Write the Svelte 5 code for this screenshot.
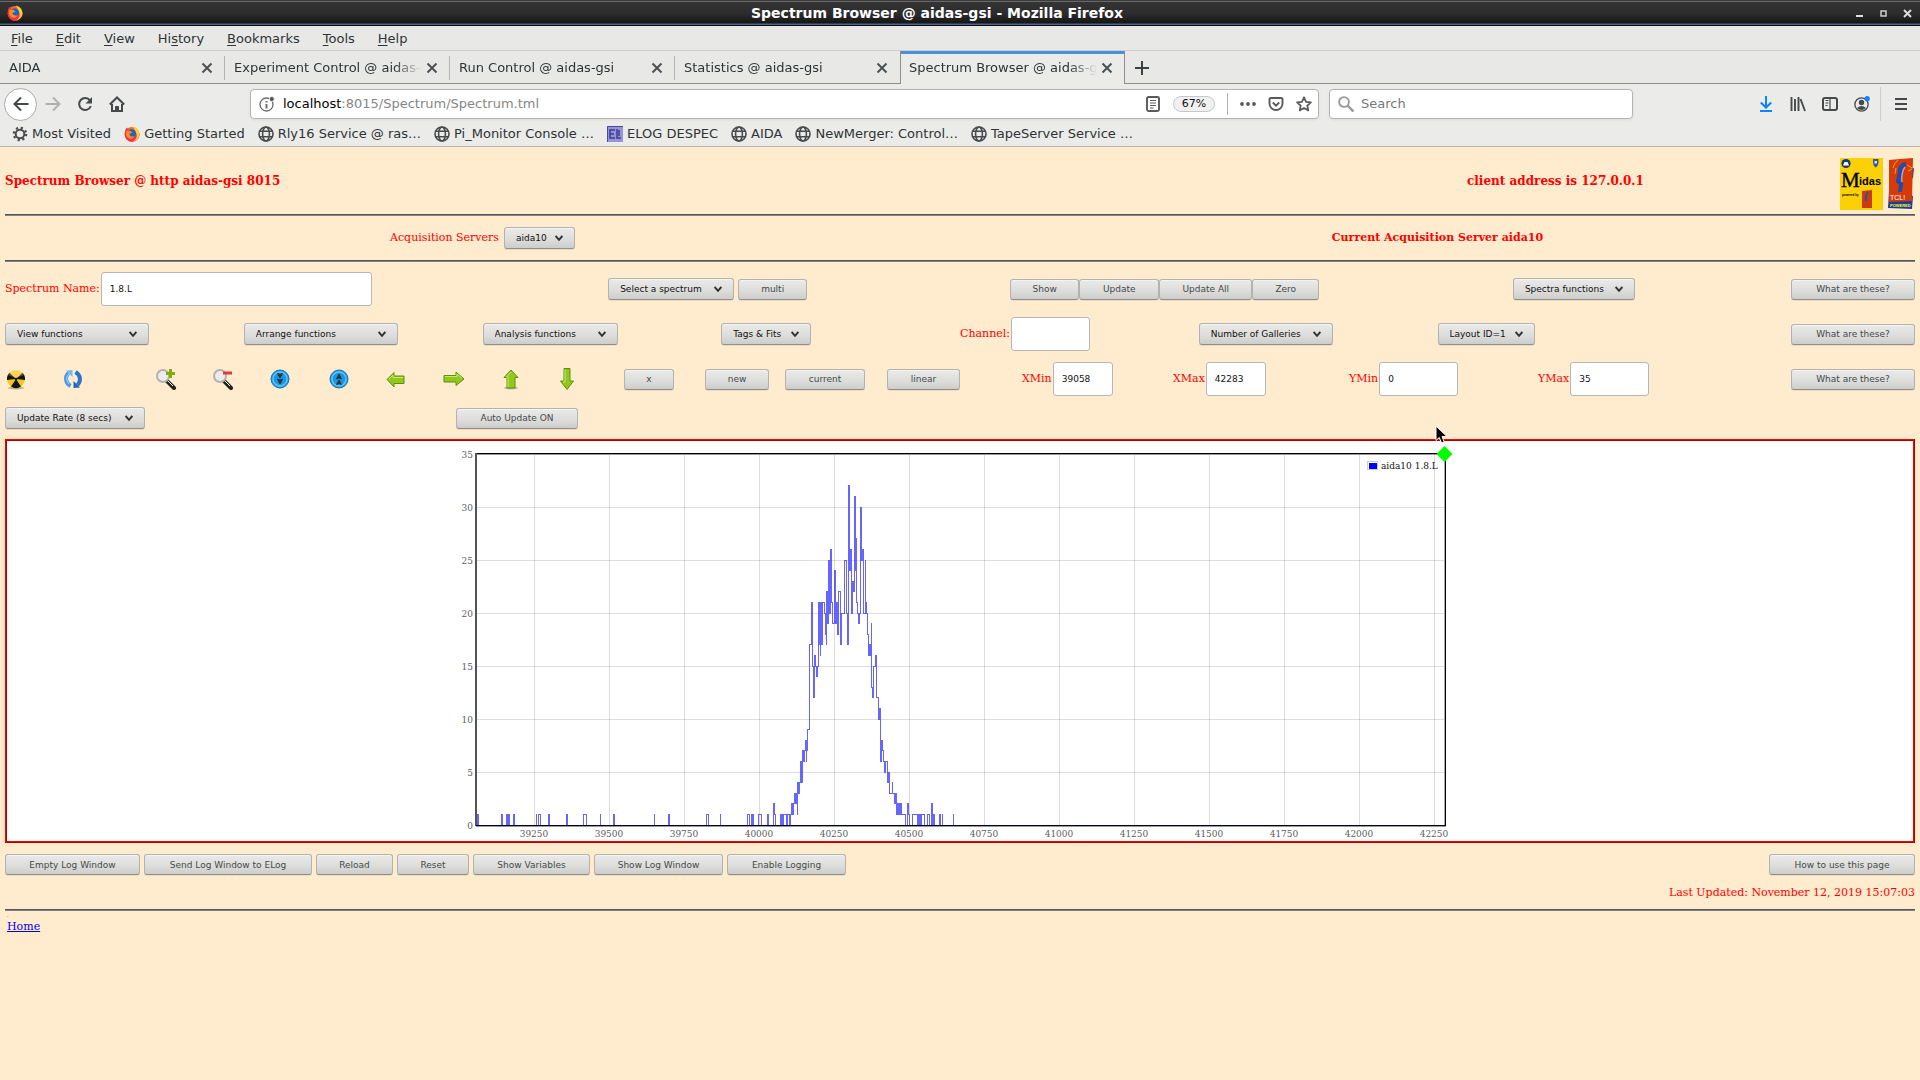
<script>
  const menus = [
    ['', 'F', 'ile'], ['', 'E', 'dit'], ['', 'V', 'iew'], ['Hi', 's', 'tory'],
    ['', 'B', 'ookmarks'], ['', 'T', 'ools'], ['', 'H', 'elp']
  ];
  const tabs = [
    'AIDA', 'Experiment Control @ aidas-gsi', 'Run Control @ aidas-gsi',
    'Statistics @ aidas-gsi', 'Spectrum Browser @ aidas-gsi'
  ];
  const bookmarks = [
    ['gear', 'Most Visited'], ['fox', 'Getting Started'], ['globe', 'Rly16 Service @ ras…'],
    ['globe', 'Pi_Monitor Console …'], ['elog', 'ELOG DESPEC'], ['globe', 'AIDA'],
    ['globe', 'NewMerger: Control…'], ['globe', 'TapeServer Service …']
  ];
  const footerButtons = [
    ['Empty Log Window', 135], ['Send Log Window to ELog', 168], ['Reload', 77], ['Reset', 72],
    ['Show Variables', 117], ['Show Log Window', 129], ['Enable Logging', 119]
  ];

  const yTicks = [0, 5, 10, 15, 20, 25, 30, 35];
  const xTicks = [39250, 39500, 39750, 40000, 40250, 40500, 40750, 41000, 41250, 41500, 41750, 42000, 42250];
  const px = (c) => Math.round((c - 39250) * 0.3 + 74);
  const py = (v) => Math.round(384 - v * 10.6);

  // [third-of-pixel position, counts]: the value holds until the next entry
  const counts = [
    [50, 0], [53, 1], [55, 0], [125, 1], [127, 0], [139, 1], [141, 0], [145, 1], [147, 0], [161, 1], [163, 0],
    [228, 1], [230, 0], [235, 1], [241, 0], [266, 1], [268, 0], [320, 1], [322, 0], [371, 1], [379, 0],
    [420, 1], [422, 0], [461, 1], [463, 0], [582, 1], [584, 0], [626, 1], [628, 0], [739, 1], [746, 0],
    [780, 1], [782, 0], [863, 1], [869, 0], [874, 1], [876, 0], [879, 1], [881, 0], [895, 1], [904, 0],
    [923, 1], [925, 0], [941, 2], [944, 1], [946, 0], [961, 1], [963, 0], [966, 1], [968, 0], [971, 1],
    [979, 0], [983, 1], [989, 0]
  ];
  const peak = [
    [31, 1], [33, 2], [35, 1], [37, 2], [39, 1], [41, 2], [43, 3], [45, 2], [48, 3], [52, 1], [53, 4], [55, 3], [58, 4],
    [61, 6], [64, 4], [66, 6], [68, 7], [70, 6], [72, 7], [75, 8], [78, 6], [80, 7], [83, 9], [89, 17],
    [95, 21], [97, 15], [101, 12], [103, 16], [106, 15], [109, 14], [113, 15], [116, 21], [118, 17], [120, 16],
    [122, 21], [124, 17], [126, 21], [133, 20], [135, 18], [138, 17], [140, 22], [143, 19], [145, 25],
    [148, 20], [151, 26], [154, 21], [158, 19], [163, 24], [165, 19], [168, 21], [171, 20], [173, 18],
    [176, 22], [182, 17], [184, 20], [194, 25], [200, 20], [203, 17], [206, 32], [208, 24], [211, 26],
    [214, 20], [217, 23], [220, 22], [222, 31], [225, 24], [228, 27], [230, 21], [233, 20], [236, 19],
    [238, 20], [241, 30], [244, 25], [247, 26], [249, 25], [251, 20], [255, 25], [257, 21], [260, 20],
    [262, 18], [265, 16], [268, 17], [270, 16], [273, 19], [275, 13], [278, 12], [281, 15], [287, 16],
    [290, 12], [295, 10], [298, 11], [301, 6], [303, 8], [307, 7], [310, 6], [314, 5], [316, 6], [322, 4],
    [325, 5], [327, 3], [336, 4], [338, 3], [343, 2], [346, 3], [349, 1], [352, 2], [354, 1], [357, 2],
    [359, 1], [362, 2], [365, 1], [377, 0], [381, 2], [384, 1], [389, 0], [397, 1], [413, 0], [416, 1],
    [418, 0], [420, 1], [423, 0], [425, 1], [432, 0], [443, 1], [448, 0], [455, 2], [457, 0], [459, 1],
    [462, 0], [479, 1], [482, 0], [486, 1], [488, 0], [519, 1], [521, 0], [1940, 0]
  ];
  const trace = [...counts, ...peak.map(([x, v]) => [x + 960, v])]
    .map(([x, v], i) => (i ? 'H' : 'M') + (x / 3).toFixed(1) + (i ? 'V' : ' ') + (384 - v * 10.6).toFixed(1))
    .join('');
</script>

{#snippet globe()}
  <svg class="i16" viewBox="0 0 16 16" fill="none" stroke="#474b4d" stroke-width="1.6">
    <circle cx="8" cy="8" r="7" /><ellipse cx="8" cy="8" rx="3.4" ry="7" /><path d="M2 5.2h12M2 10.8h12" />
  </svg>
{/snippet}

{#snippet fox()}
  <svg class="i16" viewBox="0 0 16 16">
    <circle cx="8" cy="8.3" r="7.4" fill="#ff6a1a" />
    <path d="M.7 8C.8 4 2 2.4 3.2 1.6l.6 2L8 9l7.4-2A7.4 7.4 0 0 1 8 15.7 7.4 7.4 0 0 1 .7 8z" fill="#f0304e" />
    <path d="M9 .4c4 1 6.600 4.400 6.400 8.400-.2 3.200-3 6-6 6.400 3-2 4-5 3-8z" fill="#ffd02c" />
    <circle cx="7.800" cy="7.500" r="4.200" fill="#1766c8" />
    <path d="M2.500 4.500 6.500 5l2 1.500-3 1.500c0 2 2 3 5 2.200-1 2.500-3.500 3-5.500 2.300C2 11 1.500 8 2.500 4.500z" fill="#ff8a1c" />
  </svg>
{/snippet}

{#snippet close()}
  <svg class="x" viewBox="0 0 12 12" stroke="#4a4e50" stroke-width="1.900"><path d="M1.500 1.500l9 9M10.500 1.500l-9 9" /></svg>
{/snippet}

{#snippet choice(label, size)}
  <span class="choice {size}">
    <select aria-label={label}><option>{label}</option></select>
    <svg viewBox="0 0 8 8" fill="none" stroke="#2e3436" stroke-width="2"><path d="M.6 2 4 5.800 7.400 2" /></svg>
  </span>
{/snippet}

<div class="window">
  <header class="title">
    <span class="app">{@render fox()}</span>
    <h1>Spectrum Browser @ aidas-gsi - Mozilla Firefox</h1>
    <div class="controls">
      <button aria-label="Minimize"><svg viewBox="0 0 9 9"><path d="M1 6h7v2H1z" fill="#ddd" /></svg></button>
      <button aria-label="Maximize"><svg viewBox="0 0 9 9"><path d="M2 2h5v5H2z" fill="none" stroke="#ccc" stroke-width="1.500" /></svg></button>
      <button aria-label="Close"><svg viewBox="0 0 9 9"><path d="M1 1l7 7M8 1 1 8" stroke="#ddd" stroke-width="2" /></svg></button>
    </div>
  </header>

  <nav class="menus">
    {#each menus as [a, b, c]}<button>{a}<u>{b}</u>{c}</button>{/each}
  </nav>

  <div class="tabs">
    {#each tabs as tab, i}
      <div class="tab" class:active={i === 4} class:last={i === 3}>
        <button class="name">{tab}</button>
        <button class="shut" aria-label="Close tab">{@render close()}</button>
      </div>
    {/each}
    <button class="plus" aria-label="New tab"><svg viewBox="0 0 14 14" stroke="#3c4042" stroke-width="2"><path d="M7 0v14M0 7h14" /></svg></button>
  </div>

  <div class="toolbar">
    <button class="back" aria-label="Back"><svg class="i16" viewBox="0 0 16 16" fill="none" stroke="#45494b" stroke-width="2"><path d="M15.500 8H1.500M8 1.500 1.500 8 8 14.500" /></svg></button>
    <button class="tool" aria-label="Forward"><svg class="i16" viewBox="0 0 16 16" fill="none" stroke="#aeb0b0" stroke-width="2"><path d="M.5 8h14M8 1.500 14.500 8 8 14.500" /></svg></button>
    <button class="tool" aria-label="Reload"><svg class="i16" viewBox="0 0 16 16" fill="none" stroke="#45494b" stroke-width="2"><path d="M13 4.500A6 6 0 1 0 13.800 10" /><path d="M15 1v6.500H8.500z" fill="#45494b" stroke="none" /></svg></button>
    <button class="tool" aria-label="Home"><svg class="i16" viewBox="0 0 16 16" fill="none" stroke="#45494b" stroke-width="2"><path d="M.8 8.500 8 1.500l7.200 7M3 8v7h10V8" /><path d="M6.500 14.500v-4h3v4z" fill="#45494b" stroke-width="1" /></svg></button>

    <div class="url field">
      <svg class="i16" viewBox="0 0 16 16" fill="none" stroke="#6a6a6a" stroke-width="1.300"><circle cx="7.500" cy="8.500" r="6.500" /><path d="M7.500 8v4.500M7.500 5v1.500" stroke-width="1.900" /><circle cx="12.800" cy="3" r="2.500" fill="#555" stroke="#fff" stroke-width=".8" /></svg>
      <button class="address"><b>localhost</b>:8015/Spectrum/Spectrum.tml</button>
      <svg class="i16" viewBox="0 0 16 16" fill="none" stroke="#5a5a5a"><rect x="2" y="1" width="12" height="14" rx="1.500" stroke-width="1.900" /><path d="M5 4.500h6M5 7h6M5 9.500h6M5 12h3.500" stroke-width="1.100" /></svg>
      <button class="zoom">67%</button>
      <i class="rule"></i>
      <svg class="i16" viewBox="0 0 16 16" fill="#5a5a5a"><circle cx="2" cy="8" r="1.900" /><circle cx="8" cy="8" r="1.900" /><circle cx="14" cy="8" r="1.900" /></svg>
      <svg class="i16" viewBox="0 0 16 16" fill="none" stroke="#5a5a5a" stroke-width="1.900"><path d="M2.500 2h11q1 0 1 1v4.500a6.500 6.500 0 0 1-13 0V3q0-1 1-1z" /><path d="M4.800 6.500 8 9.600l3.200-3.100" /></svg>
      <svg class="i16" viewBox="0 0 16 16" fill="none" stroke="#5a5a5a" stroke-width="1.800" stroke-linejoin="round"><path d="M8 1.300l2 4.500 4.900.5-3.600 3.300 1 4.800L8 12l-4.300 2.400 1-4.800L1.100 6.300 6 5.800z" /></svg>
    </div>

    <label class="search field">
      <svg class="i16" viewBox="0 0 16 16" fill="none" stroke="#9a9a9a" stroke-width="1.900"><circle cx="6" cy="6" r="4.900" /><path d="M9.500 9.500l6 6" stroke-width="2.400" /></svg>
      <input aria-label="Search" placeholder="Search" />
    </label>

    <div class="extras">
      <button class="tool" aria-label="Downloads"><svg class="i16" viewBox="0 0 16 16" fill="none" stroke="#0a84ff" stroke-width="2"><path d="M8 0v11M2.800 6.500 8 11.500l5.200-5M2 15h12" /></svg></button>
      <button class="tool" aria-label="Library"><svg class="i16" viewBox="0 0 16 16" fill="none" stroke="#45494b" stroke-width="1.900"><path d="M1.500 1v14M5 3v12M8.500 1v14M10.500 3l4.500 12" /></svg></button>
      <button class="tool" aria-label="Sidebars"><svg class="i16" viewBox="0 0 16 16" fill="none" stroke="#45494b"><rect x="1" y="2" width="14" height="12" rx="2" stroke-width="2" /><path d="M8 2v12" stroke-width="1.200" /><path d="M3.500 4.500h3M3.500 7h3M3.500 9.500h2" /></svg></button>
      <button class="tool" aria-label="Account"><svg class="i16" viewBox="0 0 16 16"><circle cx="7.500" cy="8.500" r="6.600" fill="none" stroke="#45494b" stroke-width="1.300" /><circle cx="7.500" cy="6.500" r="2.700" fill="#45494b" /><path d="M3 12q4.500-4 9 0-4.500 4-9 0z" fill="#45494b" /><circle cx="13.200" cy="2.700" r="2.600" fill="#0a84ff" /></svg></button>
      <i class="rule"></i>
      <button class="tool" aria-label="Menu"><svg class="i16" viewBox="0 0 16 16" stroke="#45494b" stroke-width="2"><path d="M2 3h12M2 8h12M2 13h12" /></svg></button>
    </div>
  </div>

  <nav class="bookmarks">
    {#each bookmarks as [icon, label]}
      <button>
        {#if icon === 'globe'}{@render globe()}
        {:else if icon === 'fox'}{@render fox()}
        {:else if icon === 'gear'}
          <svg class="i16" viewBox="0 0 16 16" fill="none" stroke="#474b4d"><circle cx="8" cy="8" r="4.300" stroke-width="2" /><circle cx="8" cy="8" r="6.200" stroke-width="2.200" stroke-dasharray="2.200 2.670" /></svg>
        {:else}
          <svg class="i16" viewBox="0 0 16 16"><path d="M0 0h16v16H0z" fill="#9494dc" /><path d="M.5 16V.5H16" fill="none" stroke="#4a4a8c" /><path d="M8 4H3v8h5M3 8h4M10 3v9h4M12 4v6" fill="none" stroke="#3c3c86" stroke-width="1.500" /></svg>
        {/if}
        {label}
      </button>
    {/each}
  </nav>

  <main>
    <header class="head">
      <h2>Spectrum Browser @ http aidas-gsi 8015</h2>
      <h2>client address is 127.0.0.1</h2>
      <div class="logos">
        <svg width="43" height="52" viewBox="0 0 43 52">
          <path d="M0 0h43v52H0z" fill="#fbd005" />
          <circle cx="6" cy="5.500" r="4.600" fill="#123c7c" /><path d="M3 7.500h6L7.500 4h-3z" fill="#fff" />
          <path d="M33 1h5.500v4q-.5 3-2.700 4.500Q33.500 8 33 5z" fill="#3457a8" /><path d="M34.500 3h2.500v2.500h-2.500z" fill="#dde" />
          <text x="1" y="29" font-family="Liberation Serif" font-size="21" stroke="#000" stroke-width=".4">M</text>
          <text x="19" y="27" font-family="Liberation Sans" font-weight="bold" font-size="11">idas</text>
          <text x="2" y="38" font-family="Liberation Sans" font-weight="bold" font-size="3">powered by</text>
          <path d="M22 33l10-1v18H22z" fill="#d03a10" /><path d="M28 34q-3 4-2 9" stroke="#2a50b0" stroke-width="2" fill="none" />
        </svg>
        <svg width="28" height="52" viewBox="0 0 28 52">
          <path d="M2 33l24 5-1 13-24-1zM22 12l5-2-1 10-3 1z" fill="#1b3f96" />
          <path d="M2 2l11-1 13-1-1 43-23 1z" fill="#d63a08" />
          <path d="M6 10q1-5 5-8M8 16l1-6M20 7l5 3M21 13l4-2" stroke="#f0a020" fill="none" />
          <path d="M19 6q-7 2-6 8l-2 9 3 3-1 8" fill="none" stroke="#1c4cb0" stroke-width="4" />
          <path d="M18 9q-4 6-3 15" fill="none" stroke="#9ac0f0" stroke-width="1.200" />
          <text x="3" y="42" font-family="Liberation Sans" font-size="7" fill="#fff">TCL!</text>
          <text x="3" y="49" font-family="Liberation Sans" font-weight="bold" font-size="4" fill="#ff0">POWERED</text>
        </svg>
      </div>
    </header>
    <hr />
    <div class="server">
      <div>Acquisition Servers {@render choice('aida10', 'w71')}</div>
      <strong>Current Acquisition Server aida10</strong>
    </div>
    <hr />

    <div class="form">
      <div class="row first">
        <label>Spectrum Name:<input class="wide" value="1.8.L" /></label>
        <div class="pair">{@render choice('Select a spectrum', 'w126')}<button class="btn w69">multi</button></div>
        <div><button class="btn w69">Show</button><button class="btn w80">Update</button><button class="btn w93">Update All</button><button class="btn w67">Zero</button></div>
        <div class="split">{@render choice('Spectra functions', 'w122')}<button class="btn w124">What are these?</button></div>
      </div>
      <div class="row second">
        <div>{@render choice('View functions', 'w144')}</div>
        <div>{@render choice('Arrange functions', 'w154')}</div>
        <div>{@render choice('Analysis functions', 'w135')}</div>
        <div>{@render choice('Tags & Fits', 'w90')}</div>
        <label>Channel:<input class="mid" /></label>
        <div>{@render choice('Number of Galleries', 'w134')}</div>
        <div>{@render choice('Layout ID=1', 'w97')}</div>
        <div class="end"><button class="btn w124">What are these?</button></div>
      </div>
      <div class="row third">
        <button class="glyph" aria-label="Clear"><svg viewBox="0 0 22 22"><ellipse cx="11" cy="20" rx="8" ry="1.500" fill="#8a7a60" opacity=".5" /><circle cx="11" cy="11" r="9" fill="#f6c81c" /><path d="M11 11 2.200 9A9 9 0 0 1 6 3.500zM11 11l8.800-2A9 9 0 0 0 16 3.500zM11 11l-4 8a9 9 0 0 0 8 0z" fill="#15140e" transform="rotate(180 11 11)" opacity="0" /><path d="M11 11 2 12A9 9 0 0 1 4.500 4.800zM11 11l9 1a9 9 0 0 0-2.500-7.200zM11 11l-5 7.500a9 9 0 0 0 10 0z" fill="#15140e" /><circle cx="11" cy="11" r="1.300" fill="#111" /><path d="M11 2a9 9 0 0 1 8 5q-8 4-16 0a9 9 0 0 1 8-5z" fill="#fff" opacity=".25" /></svg></button>
        <button class="glyph" aria-label="Refresh"><svg viewBox="0 0 22 22" fill="none"><path d="M8.500 18C3.500 15 2.500 9 6.500 5" stroke="#4d9be8" stroke-width="4" /><path d="M4 2.500 10.500 2v7z" fill="#7ab8f2" /><path d="M13.500 4c5 3 6 9 2 13" stroke="#2d74cc" stroke-width="4" /><path d="M18 19.500 11.500 20v-7z" fill="#2562b8" /><path d="M7 16C4 12 4 9 7 6" stroke="#b4d8fa" /></svg></button>
        <button class="glyph" aria-label="Zoom in"><svg viewBox="0 0 22 22"><path d="M12 13l7 7" stroke="#222" stroke-width="4" stroke-linecap="round" /><path d="M13 13l5 5" stroke="#eee" /><circle cx="8" cy="8" r="6" fill="#ececec" stroke="#b5b1aa" stroke-width="2" /><path d="M15.500 1v9M11 5.500h9" stroke="#7cae0a" stroke-width="3" /></svg></button>
        <button class="glyph" aria-label="Zoom out"><svg viewBox="0 0 22 22"><path d="M12 13l7 7" stroke="#222" stroke-width="4" stroke-linecap="round" /><path d="M13 13l5 5" stroke="#eee" /><circle cx="8" cy="8" r="6" fill="#ececec" stroke="#b5b1aa" stroke-width="2" /><path d="M11 5h9" stroke="#dc3c3c" stroke-width="3" /></svg></button>
        <button class="glyph" aria-label="Page down"><svg viewBox="0 0 22 22"><circle cx="11" cy="11" r="9" fill="#1897e4" stroke="#1672b6" /><circle cx="11" cy="11" r="7" fill="none" stroke="#5cc4f8" stroke-width="1.500" /><path d="M8.500 5.500l2.500 1 2.500-1-2.500 4.500zM8.500 11l2.500 1 2.500-1-2.500 5z" fill="#333" stroke="#333" /></svg></button>
        <button class="glyph" aria-label="Page up"><svg viewBox="0 0 22 22"><circle cx="11" cy="11" r="9" fill="#1897e4" stroke="#1672b6" /><circle cx="11" cy="11" r="7" fill="none" stroke="#5cc4f8" stroke-width="1.500" /><path d="M8.500 16.500l2.500-1 2.500 1-2.500-4.500zM8.500 11l2.500-1 2.500 1-2.500-5z" fill="#333" stroke="#333" /></svg></button>
        <button class="glyph" aria-label="Left"><svg viewBox="0 0 22 22"><path d="M2 11.500 9 4.500V8h10v7.500H9V19z" fill="#92c81c" stroke="#5d8f10" /><path d="M4 11l4-4v2.500h10" fill="none" stroke="#c8e878" /></svg></button>
        <button class="glyph" aria-label="Right"><svg viewBox="0 0 22 22"><path d="M21 11 13 4v3.500H1V14h12v3.500z" fill="#92c81c" stroke="#5d8f10" /><path d="M2 8.500h12V6l5 4.500" fill="none" stroke="#c8e878" /></svg></button>
        <button class="glyph" aria-label="Up"><svg viewBox="0 0 22 22"><ellipse cx="11" cy="20" rx="7" ry="1.500" fill="#8a7a60" opacity=".5" /><path d="M11 2 18 9.500h-3V20H7V9.500H4z" fill="#92c81c" stroke="#5d8f10" /><path d="M11 4 6.500 9H8v10" fill="none" stroke="#c8e878" /></svg></button>
        <button class="glyph" aria-label="Down"><svg viewBox="0 0 22 22"><path d="M11 21.500 17.500 13H14V.5H8V13H4.500z" fill="#92c81c" stroke="#5d8f10" /><path d="M9 1.500V14H7" fill="none" stroke="#c8e878" /></svg></button>
        <div><button class="btn w50">x</button></div>
        <div><button class="btn w64">new</button></div>
        <div><button class="btn w80">current</button></div>
        <div><button class="btn w73">linear</button></div>
        <label>XMin<input class="narrow" value="39058" /></label>
        <label>XMax<input class="narrow" value="42283" /></label>
        <label>YMin<input class="mid" value="0" /></label>
        <label>YMax<input class="mid" value="35" /></label>
        <div class="end"><button class="btn w124">What are these?</button></div>
      </div>
      <div class="row fourth">
        <div>{@render choice('Update Rate (8 secs)', 'w140')}</div>
        <div><button class="btn w122">Auto Update ON</button></div>
      </div>
    </div>

    <section class="gallery">
      <svg class="chart" width="1000" height="400" viewBox="0 0 1000 400" shape-rendering="crispEdges">
        <g stroke="#545454" stroke-opacity=".2">
          {#each xTicks as t}<path d="M{px(t) + 0.5} 13V384" />{/each}
          {#each yTicks as t}<path d="M17 {py(t) + 0.5}H984" />{/each}
        </g>
        <path d={trace} fill="none" stroke="#4040ff" stroke-opacity=".8" />
        <path d="M985.500 12V385" stroke="#000" /><path d="M984.500 14V384" stroke="#a8a8a8" />
        <path d="M16 385.500H986" stroke="#999" /><path d="M15 12.500H986" stroke="#000" /><path d="M17 13.500H984" stroke="#999" />
        <path d="M16 12V385" stroke="#545454" stroke-width="2" />
        <path d="M16 384.500H986" stroke="#00002a" />
        <g class="ticks">
          {#each xTicks as t}<text x={px(t)} y="396" text-anchor="middle">{t}</text>{/each}
          {#each yTicks as t}<text x="13" y={py(t) + 4} text-anchor="end">{t}</text>{/each}
        </g>
        <rect x="907.500" y="20.500" width="10" height="8" fill="#fff" stroke="#ccc" /><path d="M909 22h8v6h-8z" fill="#00f" />
        <text class="legend" x="921" y="28">aida10 1.8.L</text>
        <path class="smooth" d="M984.500 5l8 8-8 8-8-8z" fill="#0f0" />
      </svg>
      <svg class="cursor" width="14" height="20" viewBox="0 0 14 20"><path d="M1 1v14.500l3.300-3 2.300 5.500 2.600-1.100L7 11.600h5z" fill="#000" stroke="#fff" stroke-width="1" /></svg>
    </section>

    <div class="actions">
      {#each footerButtons as [label, width]}<button class="btn" style:width="{width}px">{label}</button>{/each}
      <button class="btn help">How to use this page</button>
    </div>
    <p class="updated">Last Updated: November 12, 2019 15:07:03</p>
    <hr />
    <div class="dot">.</div>
    <a href="#home">Home</a>
  </main>
</div>

<style>
  :global(body) { background: #ffebcd; }
  .window { font: 13px/16px "DejaVu Sans", sans-serif; color: #2e3436; min-width: 1200px; }
  button { font: inherit; color: inherit; background: none; border: 0; padding: 0; margin: 0; white-space: nowrap; }
  svg { display: block; flex: none; }
  .i16 { width: 16px; height: 16px; }

  .title {
    display: grid; grid-template-columns: 60px 1fr 60px; align-items: center; height: 26px; box-sizing: border-box;
    background: linear-gradient(#3c3c3c 0 1px, #686868 1px 2px, #343434 2px, #2c2c2c 14px, #161616 23px, #48648a 24px, #48648a 25px, #0c0c10 25px);
    padding-right: 8px;
  }
  .app { padding-left: 7px; }
  h1 { margin: 0; text-align: center; font-size: 14px; line-height: 20px; color: #fff; padding-right: 38px; }
  .controls { display: flex; gap: 15px; justify-content: flex-end; }
  .controls svg { width: 9px; height: 9px; }

  .menus { display: flex; gap: 23px; padding: 1px 11px 0; height: 23px; background: #e8e8e6; border-bottom: 1px solid #cfcfcd; }
  .menus u { text-underline-offset: 2px; }

  .tabs { display: flex; height: 33px; background: #e8e8e6; box-shadow: inset 0 -1px #8e8e8c; }
  .tab { display: flex; align-items: center; width: 225px; height: 33px; box-sizing: border-box; padding: 0 12px 0 9px; position: relative; }
  .tab:not(.active):not(.last)::after { content: ""; position: absolute; right: 0; top: 5px; bottom: 4px; width: 1px; background: #b4b4b2; }
  .name { flex: 1; min-width: 0; overflow: hidden; text-align: left; height: 20px; mask-image: linear-gradient(to right, #000 160px, transparent 188px); }
  .active { background: #ebebe9; border: solid #8e8e8c; border-width: 0 1px; box-shadow: inset 0 3px #4a90d9; padding-right: 11px; padding-left: 8px; }
  .x { width: 12px; height: 12px; }
  .plus { margin-left: 10px; }
  .plus svg { width: 14px; height: 14px; }

  .toolbar { display: flex; align-items: center; height: 37px; box-sizing: border-box; padding: 3px 3px 0 4px; background: #ebebe9; }
  .back { width: 33px; height: 33px; box-sizing: border-box; border: 1px solid #aaa; border-radius: 50%; background: #fff; display: grid; place-items: center; }
  .tool { width: 32px; display: grid; place-items: center; }
  .field { box-sizing: border-box; height: 30px; border: 1px solid #b4b4b2; border-radius: 4px; background: #fff; display: flex; align-items: center; box-shadow: 0 1px 3px #0001; }
  .url { flex: 0 1 1069px; margin-left: 117px; padding: 0 6px 0 8px; gap: 12px; }
  .address { flex: 1; text-align: left; color: #868686; margin-left: -4px; }
  .address b { font-weight: normal; color: #000; }
  .zoom { font-size: 11px; line-height: 14px; width: 42px; height: 16px; border: 1px solid #c8c8c8; border-radius: 8px; background: #f0f0f0; color: #111; box-sizing: border-box; }
  .rule { width: 1px; height: 22px; background: #b4b4b2; }
  .search { flex: 0 1 304px; margin-left: 10px; padding: 0 8px; gap: 7px; }
  .search input { all: unset; flex: 1; min-width: 0; }
  .search input::placeholder { color: #777; opacity: 1; }
  .extras { display: flex; align-items: center; margin-left: auto; }
  .extras .rule { height: 34px; margin: 0 4px 0 2px; background: #ccc; }

  .bookmarks { display: flex; gap: 13px; height: 25px; padding-left: 12px; background: #ebebe9; border-bottom: 1px solid #b4b4b2; }
  .bookmarks button { display: flex; align-items: center; gap: 4px; }

  main { padding: 0 5px; font: 11px/14px "DejaVu Serif", serif; color: #f00; }
  hr { margin: 0; border: 0; height: 2px; background: linear-gradient(#555459 1px, #858287 1px); }
  .head { display: flex; align-items: center; height: 67px; }
  h2 { margin: 0; font-size: 12px; line-height: 16px; flex: 1 0 0; }
  h2 + h2 { flex: 0 0 373px; }
  .logos { display: flex; gap: 4px; align-self: flex-start; padding-top: 11px; }
  .server { display: grid; grid-template-columns: 955fr 955fr; height: 44px; align-items: center; justify-items: center; }
  .server > div { display: flex; align-items: center; gap: 5px; }
  .choice { display: inline-grid; grid-template-columns: minmax(0, 1fr); align-items: center; }
  .choice select, .choice svg { grid-area: 1 / 1; }
  .choice select, .btn {
    box-sizing: border-box; width: 100%; font: 9px/12px "DejaVu Sans", sans-serif;
    border: 1px solid #b2b2b0; border-bottom-color: #8e8e8c; border-radius: 3px;
    background: linear-gradient(#eaeae8, #dcdcda 60%, #cdcdcb); box-shadow: inset 0 1px #f4f4f2, 0 1px #0001;
  }
  .choice select { appearance: none; height: 22px; padding: 0 20px 0 11px; color: #111; margin: 0; }
  .choice svg { justify-self: end; width: 8px; height: 8px; margin-right: 12px; pointer-events: none; }
  .btn { width: auto; height: 21px; padding: 0; text-align: center; color: #444a4c; }

  .form { display: grid; gap: 11px; padding: 10px 0; }
  .row { display: grid; align-items: center; min-height: 34px; }
  .row > * { display: flex; align-items: center; min-width: 0; white-space: nowrap; }
  .row > label { gap: 1px; }
  .first { grid-template-columns: 6fr 4fr 5fr 4fr; }
  .second { grid-template-columns: repeat(8, minmax(0, 1fr)); }
  .third { grid-template-columns: 57fr 93fr 57fr 57fr 59fr 57fr 58fr 57fr 56fr 68fr 81fr 80fr 102fr 135fr 151fr 176fr 189fr 253fr 124fr; }
  .fourth { grid-template-columns: 451fr 1459fr; min-height: 22px; }
  .row > .pair { gap: 4px; }
  .row > .split { justify-content: space-between; }
  .row > .end { justify-content: flex-end; }
  .form input { box-sizing: border-box; height: 34px; margin: 0; padding: 0 8px; border: 1px solid #b6b6b4; border-radius: 3px; background: #fff; font: 9px/12px "DejaVu Sans", sans-serif; color: #111; }
  .wide { width: 271px; }
  .mid { width: 79px; }
  .narrow { width: 60px; }
  .glyph svg { width: 22px; height: 22px; }

  .w50 { width: 50px; } .w64 { width: 64px; } .w67 { width: 67px; } .w69 { width: 69px; } .w71 { width: 71px; }
  .w73 { width: 73px; } .w80 { width: 80px; } .w90 { width: 90px; } .w93 { width: 93px; } .w97 { width: 97px; }
  .w122 { width: 122px; } .w124 { width: 124px; } .w126 { width: 126px; } .w134 { width: 134px; } .w135 { width: 135px; }
  .w140 { width: 140px; } .w144 { width: 144px; } .w154 { width: 154px; }

  .gallery { border: 2px ridge #f00; background: #fff; display: grid; justify-items: center; position: relative; }
  .ticks { font-size: 9px; fill: #606060; }
  .legend { font-size: 9px; fill: #111; }
  .smooth { shape-rendering: auto; }
  .cursor { position: absolute; left: calc(50% + 475px); top: -16px; }

  .actions { display: flex; gap: 4px; padding-top: 11px; }
  .help { margin-left: auto; width: 146px; }
  .updated { margin: 11px 0 9px; text-align: right; }
  .dot { font-size: 5px; line-height: 9px; color: #000; padding-left: 2px; }
  main a { display: inline-block; margin-left: 2px; color: #00e; }
</style>
